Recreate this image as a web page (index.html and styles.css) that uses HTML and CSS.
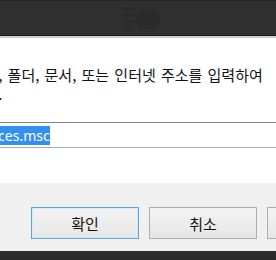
FILE: index.html
```html
<!DOCTYPE html>
<html lang="ko">
<head>
  <meta charset="UTF-8" />
  <meta name="viewport" content="width=device-width, initial-scale=1.0" />
  <title>실행</title>
  <link rel="stylesheet" href="styles.css">
</head>

<body>
  <div class="titlebar">
    <svg class="title-icon" width="38" height="24" viewBox="0 0 38 24">
      <rect x="1" y="1" width="11" height="3" fill="#2a2a2a" />
      <rect x="1" y="7" width="13" height="3" fill="#2a2a2a" />
      <rect x="1" y="14" width="12" height="3" fill="#2a2a2a" />
      <rect x="1" y="19" width="10" height="3" fill="#2a2a2a" />
      <rect x="15" y="4" width="22" height="19" rx="6" fill="#2b2b2b" />
    </svg>
  </div>

  <div class="content">
    <p class="prompt">프로그램, 폴더, 문서, 또는 인터넷 주소를 입력하여<br>여십시오.</p>

    <div class="field">
      <span class="sel">services.msc</span>
    </div>
  </div>

  <div class="footer">
    <button class="btn btn-default">확인</button>
    <button class="btn">취소</button>
    <button class="btn">찾아보기(B)...</button>
  </div>

  <div class="taskbar"></div>
</body>
</html>
```

FILE: styles.css
```css
body {
  margin: 0;
  width: 276px;
  height: 260px;
  overflow: hidden;
  background: #2b2b2b;
  font-family: "Noto Sans CJK KR", "Noto Sans", sans-serif;
}

.titlebar {
  height: 34px;
  background: #2f2f2f;
  border-top: 1px solid #262626;
  border-bottom: 1px solid #1c1c1c;
  display: flex;
  justify-content: center;
  align-items: center;
}

.title-icon {
  margin-left: 6px;
}

.content {
  background: white;
  border-top: 2px solid #cdcdcd;
  height: 145px;
  overflow: hidden;
}

.prompt {
  margin: 27px 0 0 -57px;
  font-size: 15px;
  line-height: 19px;
  color: #111;
  white-space: nowrap;
  word-spacing: 1px;
}

.field {
  margin: 19px -10px 0 -37px;
  height: 24px;
  border: 1px solid #abadb3;
  border-top-color: #7f8589;
  display: flex;
  align-items: center;
  padding-left: 3px;
  font-family: "Noto Sans", sans-serif;
  font-size: 14px;
}

.sel {
  background: #3390f0;
  color: white;
  line-height: 19px;
  white-space: nowrap;
}

.footer {
  background: #f0f0f0;
  height: 68px;
  display: flex;
  gap: 10px;
  padding: 24px 0 0 31px;
  box-sizing: border-box;
  white-space: nowrap;
}

.btn {
  flex: none;
  width: 108px;
  height: 32px;
  background: linear-gradient(#f3f3f3, #e6e6e6);
  border: 1px solid #adadad;
  font-family: "Noto Sans CJK KR", sans-serif;
  font-size: 15px;
  color: #111;
  padding: 0;
}

.btn-default {
  border-color: #62a2d8;
  box-shadow: inset 0 0 0 1px #d6e8f6;
}

.taskbar {
  height: 9px;
  background: #2b2b2b;
}
```
